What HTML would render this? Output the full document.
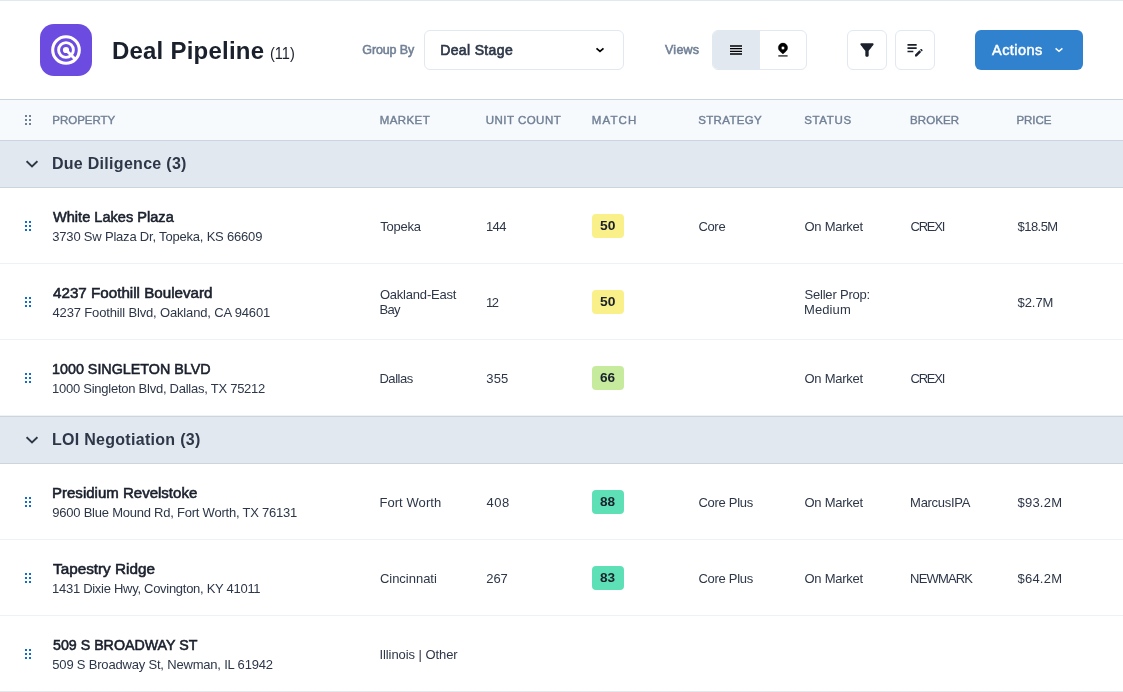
<!DOCTYPE html>
<html><head><meta charset="utf-8"><style>
html,body{margin:0;padding:0;width:1123px;height:692px;overflow:hidden;background:#fff;}
body{position:relative;font-family:"Liberation Sans",sans-serif;}
.wrap{position:absolute;left:0;top:0;width:1123px;height:692px;overflow:hidden;will-change:transform;background:#fff;}
.t{position:absolute;white-space:nowrap;}
svg{display:block}
</style></head><body><div class="wrap">
<div style="position:absolute;left:0px;top:0px;width:1123px;height:1px;background:#E2E8F0"></div>
<div style="position:absolute;left:0px;top:99px;width:1123px;height:1px;background:#CBD5E0"></div>
<div style="position:absolute;left:0px;top:100px;width:1123px;height:40px;background:#F7FAFC"></div>
<div style="position:absolute;left:0px;top:140px;width:1123px;height:1px;background:#CBD5E0"></div>
<div style="position:absolute;left:0px;top:141px;width:1123px;height:46px;background:#E2E8F0"></div>
<div style="position:absolute;left:0px;top:187px;width:1123px;height:1px;background:#CBD5E0"></div>
<div style="position:absolute;left:0px;top:263px;width:1123px;height:1px;background:#EDF2F7"></div>
<div style="position:absolute;left:0px;top:339px;width:1123px;height:1px;background:#EDF2F7"></div>
<div style="position:absolute;left:0px;top:415px;width:1123px;height:1px;background:#EDF2F7"></div>
<div style="position:absolute;left:0px;top:416px;width:1123px;height:1px;background:#CBD5E0"></div>
<div style="position:absolute;left:0px;top:417px;width:1123px;height:46px;background:#E2E8F0"></div>
<div style="position:absolute;left:0px;top:463px;width:1123px;height:1px;background:#CBD5E0"></div>
<div style="position:absolute;left:0px;top:539px;width:1123px;height:1px;background:#EDF2F7"></div>
<div style="position:absolute;left:0px;top:615px;width:1123px;height:1px;background:#EDF2F7"></div>
<div style="position:absolute;left:0px;top:691px;width:1123px;height:1px;background:#E2E8F0"></div>
<div style="position:absolute;left:40px;top:24px;width:52px;height:52px;background:#6B4BE0;border-radius:14px"></div>
<svg style="position:absolute;left:48px;top:32px;" width="36" height="36" viewBox="0 0 36 36"><g fill="none" stroke="#fff" stroke-width="3"><circle cx="18" cy="18" r="13.3" stroke-width="3.1"/><circle cx="18" cy="18" r="7.4" stroke-width="2.9"/></g><circle cx="18" cy="18" r="3.1" fill="#fff"/><path d="M18 18 L28 28" stroke="#fff" stroke-width="3"/></svg>
<div class="t" style="left:111.90px;top:39.03px;font-size:24px;line-height:24px;font-weight:700;color:#1A202C;letter-spacing:0.229px;">Deal Pipeline</div>
<div class="t" style="left:270.09px;top:46.01px;font-size:16px;line-height:16px;font-weight:400;color:#1A202C;letter-spacing:0.000px;transform:scaleX(0.9098);transform-origin:0 0;">(11)</div>
<div class="t" style="left:362.35px;top:43.97px;font-size:12.5px;line-height:12.5px;font-weight:400;color:#718096;letter-spacing:-0.143px;-webkit-text-stroke:0.55px #718096;">Group By</div>
<div style="position:absolute;left:424px;top:30px;width:200px;height:40px;box-sizing:border-box;border:1px solid #E2E8F0;border-radius:6px;background:#fff"></div>
<div class="t" style="left:440.25px;top:43.00px;font-size:14px;line-height:14px;font-weight:400;color:#2D3748;letter-spacing:0.350px;-webkit-text-stroke:0.65px #2D3748;">Deal Stage</div>
<svg style="position:absolute;left:592px;top:42px;" width="16" height="16" viewBox="0 0 16 16"><path d="M4.5 6.3 L8 9.3 L11.5 6.3" fill="none" stroke="#000" stroke-width="1.75"/></svg>
<div class="t" style="left:665.00px;top:43.97px;font-size:12.5px;line-height:12.5px;font-weight:400;color:#718096;letter-spacing:0.250px;-webkit-text-stroke:0.55px #718096;">Views</div>
<div style="position:absolute;left:712px;top:30px;width:95px;height:40px;box-sizing:border-box;border:1px solid #E2E8F0;border-radius:6px;background:#fff;overflow:hidden"></div>
<div style="position:absolute;left:713px;top:31px;width:47px;height:38px;background:#E2E8F0;border-radius:5px 0 0 5px"></div>
<svg style="position:absolute;left:728px;top:42px" width="16" height="16" viewBox="0 0 24 24"><path d="M3 15h18v-2H3v2zm0 4h18v-2H3v2zm0-8h18V9H3v2zm0-6v2h18V5H3z" fill="#000"/></svg>
<svg style="position:absolute;left:774px;top:40px;" width="18" height="20" viewBox="0 0 18 20"><path d="M8.95 13.9 L5.9 11.27 A4.65 4.65 0 1 1 12.0 11.27 Z M8.95 9.65 A1.65 1.65 0 1 0 8.95 6.35 A1.65 1.65 0 1 0 8.95 9.65 Z" fill="#000" stroke="#000" stroke-width="0.4" stroke-linejoin="round" fill-rule="evenodd"/><rect x="4.3" y="15.2" width="9.3" height="1.4" fill="#333"/></svg>
<div style="position:absolute;left:847px;top:30px;width:40px;height:40px;box-sizing:border-box;border:1px solid #E2E8F0;border-radius:6px;background:#fff"></div>
<svg style="position:absolute;left:857px;top:40.2px" width="20" height="20" viewBox="0 0 24 24"><path d="M4.25 5.61C6.27 8.2 10 13 10 13v6c0 .55.45 1 1 1h2c.55 0 1-.45 1-1v-6s3.72-4.8 5.74-7.39c.51-.66.04-1.61-.79-1.61H5.04c-.83 0-1.3.95-.79 1.61z" fill="#1A202C"/></svg>
<div style="position:absolute;left:895px;top:30px;width:40px;height:40px;box-sizing:border-box;border:1px solid #E2E8F0;border-radius:6px;background:#fff"></div>
<svg style="position:absolute;left:905px;top:38.6px" width="20" height="20" viewBox="0 0 24 24"><path d="M3 10h11v2H3v-2zm0-2h11V6H3v2zm0 8h7v-2H3v2zm15.01-3.13.71-.71c.39-.39 1.020-.39 1.41 0l.71.71c.39.39.39 1.02 0 1.41l-.71.71-2.12-2.12zm-.71.71-5.3 5.3V21h2.12l5.3-5.3-2.12-2.12z" fill="#1A202C"/></svg>
<div style="position:absolute;left:975px;top:30px;width:108px;height:40px;background:#3182CE;border-radius:6px"></div>
<div class="t" style="left:992.10px;top:42.98px;font-size:14.5px;line-height:14.5px;font-weight:400;color:#fff;letter-spacing:0.417px;-webkit-text-stroke:0.5px #fff;">Actions</div>
<svg style="position:absolute;left:1051px;top:42px;" width="16" height="16" viewBox="0 0 16 16"><path d="M4.6 6.4 L8 9.4 L11.4 6.4" fill="none" stroke="#fff" stroke-width="1.45"/></svg>
<svg style="position:absolute;left:25px;top:115px;" width="8" height="12" viewBox="0 0 8 12"><g fill="#718096"><rect x="0" y="0" width="2" height="2"/><rect x="4" y="0" width="2" height="2"/><rect x="0" y="4" width="2" height="2"/><rect x="4" y="4" width="2" height="2"/><rect x="0" y="8" width="2" height="2"/><rect x="4" y="8" width="2" height="2"/></g></svg>
<div class="t" style="left:52.30px;top:114.92px;font-size:11.5px;line-height:11.5px;font-weight:400;color:#718096;letter-spacing:-0.021px;-webkit-text-stroke:0.4px #718096;">PROPERTY</div>
<div class="t" style="left:379.80px;top:114.92px;font-size:11.5px;line-height:11.5px;font-weight:400;color:#718096;letter-spacing:0.400px;-webkit-text-stroke:0.4px #718096;">MARKET</div>
<div class="t" style="left:485.70px;top:114.92px;font-size:11.5px;line-height:11.5px;font-weight:400;color:#718096;letter-spacing:0.478px;-webkit-text-stroke:0.4px #718096;">UNIT COUNT</div>
<div class="t" style="left:591.70px;top:114.92px;font-size:11.5px;line-height:11.5px;font-weight:400;color:#718096;letter-spacing:1.150px;-webkit-text-stroke:0.4px #718096;">MATCH</div>
<div class="t" style="left:698.25px;top:114.92px;font-size:11.5px;line-height:11.5px;font-weight:400;color:#718096;letter-spacing:0.329px;-webkit-text-stroke:0.4px #718096;">STRATEGY</div>
<div class="t" style="left:804.15px;top:114.92px;font-size:11.5px;line-height:11.5px;font-weight:400;color:#718096;letter-spacing:0.690px;-webkit-text-stroke:0.4px #718096;">STATUS</div>
<div class="t" style="left:910.10px;top:114.92px;font-size:11.5px;line-height:11.5px;font-weight:400;color:#718096;letter-spacing:0.080px;-webkit-text-stroke:0.4px #718096;">BROKER</div>
<div class="t" style="left:1016.40px;top:114.92px;font-size:11.5px;line-height:11.5px;font-weight:400;color:#718096;letter-spacing:0.000px;-webkit-text-stroke:0.4px #718096;">PRICE</div>
<svg style="position:absolute;left:26px;top:160px;" width="12" height="8" viewBox="0 0 12 8"><path d="M0.6 1.2 L6 6.4 L11.4 1.2" fill="none" stroke="#2D3748" stroke-width="1.85"/></svg>
<div class="t" style="left:51.90px;top:156.01px;font-size:16px;line-height:16px;font-weight:700;color:#2D3748;letter-spacing:0.297px;">Due Diligence (3)</div>
<svg style="position:absolute;left:26px;top:436px;" width="12" height="8" viewBox="0 0 12 8"><path d="M0.6 1.2 L6 6.4 L11.4 1.2" fill="none" stroke="#2D3748" stroke-width="1.85"/></svg>
<div class="t" style="left:51.90px;top:432.01px;font-size:16px;line-height:16px;font-weight:700;color:#2D3748;letter-spacing:0.294px;">LOI Negotiation (3)</div>
<svg style="position:absolute;left:25px;top:221px;" width="8" height="12" viewBox="0 0 8 12"><g fill="#126BC9"><rect x="0" y="0" width="2" height="2"/><rect x="4" y="0" width="2" height="2"/><rect x="0" y="4" width="2" height="2"/><rect x="4" y="4" width="2" height="2"/><rect x="0" y="8" width="2" height="2"/><rect x="4" y="8" width="2" height="2"/></g></svg>
<div class="t" style="left:53.32px;top:210.00px;font-size:14px;line-height:14px;font-weight:400;color:#1A202C;letter-spacing:0.000px;transform:scaleX(1.0415);transform-origin:0 0;-webkit-text-stroke:0.55px #1A202C;">White Lakes Plaza</div>
<div class="t" style="left:52.30px;top:230.05px;font-size:13px;line-height:13px;font-weight:400;color:#2D3748;letter-spacing:-0.197px;">3730 Sw Plaza Dr, Topeka, KS 66609</div>
<div class="t" style="left:380.15px;top:220.05px;font-size:13px;line-height:13px;font-weight:400;color:#2D3748;letter-spacing:-0.230px;">Topeka</div>
<div class="t" style="left:485.95px;top:220.05px;font-size:13px;line-height:13px;font-weight:400;color:#2D3748;letter-spacing:-0.575px;">144</div>
<div style="position:absolute;left:592px;top:214px;width:32px;height:24px;background:#FAF089;border-radius:4px"></div>
<div class="t" style="left:600.01px;top:219.99px;font-size:12px;line-height:12px;font-weight:700;color:#1A202C;letter-spacing:0.000px;transform:scaleX(1.1529);transform-origin:0 0;">50</div>
<div class="t" style="left:698.40px;top:220.05px;font-size:13px;line-height:13px;font-weight:400;color:#2D3748;letter-spacing:-0.317px;">Core</div>
<div class="t" style="left:804.50px;top:220.05px;font-size:13px;line-height:13px;font-weight:400;color:#2D3748;letter-spacing:-0.269px;">On Market</div>
<div class="t" style="left:910.60px;top:220.05px;font-size:13px;line-height:13px;font-weight:400;color:#2D3748;letter-spacing:-1.262px;">CREXI</div>
<div class="t" style="left:1017.50px;top:220.05px;font-size:13px;line-height:13px;font-weight:400;color:#2D3748;letter-spacing:-0.540px;">$18.5M</div>
<svg style="position:absolute;left:25px;top:297px;" width="8" height="12" viewBox="0 0 8 12"><g fill="#126BC9"><rect x="0" y="0" width="2" height="2"/><rect x="4" y="0" width="2" height="2"/><rect x="0" y="4" width="2" height="2"/><rect x="4" y="4" width="2" height="2"/><rect x="0" y="8" width="2" height="2"/><rect x="4" y="8" width="2" height="2"/></g></svg>
<div class="t" style="left:52.80px;top:286.00px;font-size:14px;line-height:14px;font-weight:400;color:#1A202C;letter-spacing:0.000px;transform:scaleX(1.0846);transform-origin:0 0;-webkit-text-stroke:0.55px #1A202C;">4237 Foothill Boulevard</div>
<div class="t" style="left:52.55px;top:306.05px;font-size:13px;line-height:13px;font-weight:400;color:#2D3748;letter-spacing:-0.156px;">4237 Foothill Blvd, Oakland, CA 94601</div>
<div class="t" style="left:379.90px;top:288.05px;font-size:13px;line-height:13px;font-weight:400;color:#2D3748;letter-spacing:-0.205px;">Oakland-East</div>
<div class="t" style="left:379.40px;top:303.05px;font-size:13px;line-height:13px;font-weight:400;color:#2D3748;letter-spacing:-0.600px;">Bay</div>
<div class="t" style="left:485.95px;top:296.05px;font-size:13px;line-height:13px;font-weight:400;color:#2D3748;letter-spacing:-1.450px;">12</div>
<div style="position:absolute;left:592px;top:290px;width:32px;height:24px;background:#FAF089;border-radius:4px"></div>
<div class="t" style="left:600.01px;top:295.99px;font-size:12px;line-height:12px;font-weight:700;color:#1A202C;letter-spacing:0.000px;transform:scaleX(1.1529);transform-origin:0 0;">50</div>
<div class="t" style="left:804.50px;top:288.05px;font-size:13px;line-height:13px;font-weight:400;color:#2D3748;letter-spacing:-0.205px;">Seller Prop:</div>
<div class="t" style="left:804.00px;top:303.05px;font-size:13px;line-height:13px;font-weight:400;color:#2D3748;letter-spacing:0.100px;">Medium</div>
<div class="t" style="left:1017.50px;top:296.05px;font-size:13px;line-height:13px;font-weight:400;color:#2D3748;letter-spacing:-0.062px;">$2.7M</div>
<svg style="position:absolute;left:25px;top:373px;" width="8" height="12" viewBox="0 0 8 12"><g fill="#126BC9"><rect x="0" y="0" width="2" height="2"/><rect x="4" y="0" width="2" height="2"/><rect x="0" y="4" width="2" height="2"/><rect x="4" y="4" width="2" height="2"/><rect x="0" y="8" width="2" height="2"/><rect x="4" y="8" width="2" height="2"/></g></svg>
<div class="t" style="left:52.03px;top:362.00px;font-size:14px;line-height:14px;font-weight:400;color:#1A202C;letter-spacing:0.000px;transform:scaleX(1.0227);transform-origin:0 0;-webkit-text-stroke:0.55px #1A202C;">1000 SINGLETON BLVD</div>
<div class="t" style="left:52.05px;top:382.05px;font-size:13px;line-height:13px;font-weight:400;color:#2D3748;letter-spacing:-0.253px;">1000 Singleton Blvd, Dallas, TX 75212</div>
<div class="t" style="left:379.40px;top:372.05px;font-size:13px;line-height:13px;font-weight:400;color:#2D3748;letter-spacing:-0.430px;">Dallas</div>
<div class="t" style="left:486.20px;top:372.05px;font-size:13px;line-height:13px;font-weight:400;color:#2D3748;letter-spacing:0.225px;">355</div>
<div style="position:absolute;left:592px;top:366px;width:32px;height:24px;background:#C6EB9C;border-radius:4px"></div>
<div class="t" style="left:600.02px;top:371.99px;font-size:12px;line-height:12px;font-weight:700;color:#1A202C;letter-spacing:0.000px;transform:scaleX(1.1308);transform-origin:0 0;">66</div>
<div class="t" style="left:804.50px;top:372.05px;font-size:13px;line-height:13px;font-weight:400;color:#2D3748;letter-spacing:-0.269px;">On Market</div>
<div class="t" style="left:910.60px;top:372.05px;font-size:13px;line-height:13px;font-weight:400;color:#2D3748;letter-spacing:-1.262px;">CREXI</div>
<svg style="position:absolute;left:25px;top:497px;" width="8" height="12" viewBox="0 0 8 12"><g fill="#126BC9"><rect x="0" y="0" width="2" height="2"/><rect x="4" y="0" width="2" height="2"/><rect x="0" y="4" width="2" height="2"/><rect x="4" y="4" width="2" height="2"/><rect x="0" y="8" width="2" height="2"/><rect x="4" y="8" width="2" height="2"/></g></svg>
<div class="t" style="left:52.00px;top:486.00px;font-size:14px;line-height:14px;font-weight:400;color:#1A202C;letter-spacing:0.000px;transform:scaleX(1.0729);transform-origin:0 0;-webkit-text-stroke:0.55px #1A202C;">Presidium Revelstoke</div>
<div class="t" style="left:52.30px;top:506.05px;font-size:13px;line-height:13px;font-weight:400;color:#2D3748;letter-spacing:-0.231px;">9600 Blue Mound Rd, Fort Worth, TX 76131</div>
<div class="t" style="left:379.40px;top:496.05px;font-size:13px;line-height:13px;font-weight:400;color:#2D3748;letter-spacing:0.078px;">Fort Worth</div>
<div class="t" style="left:486.45px;top:496.05px;font-size:13px;line-height:13px;font-weight:400;color:#2D3748;letter-spacing:0.500px;">408</div>
<div style="position:absolute;left:592px;top:490px;width:32px;height:24px;background:#5EE0B6;border-radius:4px"></div>
<div class="t" style="left:600.02px;top:495.99px;font-size:12px;line-height:12px;font-weight:700;color:#1A202C;letter-spacing:0.000px;transform:scaleX(1.1308);transform-origin:0 0;">88</div>
<div class="t" style="left:698.40px;top:496.05px;font-size:13px;line-height:13px;font-weight:400;color:#2D3748;letter-spacing:-0.281px;">Core Plus</div>
<div class="t" style="left:804.50px;top:496.05px;font-size:13px;line-height:13px;font-weight:400;color:#2D3748;letter-spacing:-0.269px;">On Market</div>
<div class="t" style="left:910.10px;top:496.05px;font-size:13px;line-height:13px;font-weight:400;color:#2D3748;letter-spacing:-0.294px;">MarcusIPA</div>
<div class="t" style="left:1017.50px;top:496.05px;font-size:13px;line-height:13px;font-weight:400;color:#2D3748;letter-spacing:0.220px;">$93.2M</div>
<svg style="position:absolute;left:25px;top:573px;" width="8" height="12" viewBox="0 0 8 12"><g fill="#126BC9"><rect x="0" y="0" width="2" height="2"/><rect x="4" y="0" width="2" height="2"/><rect x="0" y="4" width="2" height="2"/><rect x="4" y="4" width="2" height="2"/><rect x="0" y="8" width="2" height="2"/><rect x="4" y="8" width="2" height="2"/></g></svg>
<div class="t" style="left:52.80px;top:562.00px;font-size:14px;line-height:14px;font-weight:400;color:#1A202C;letter-spacing:0.000px;transform:scaleX(1.0914);transform-origin:0 0;-webkit-text-stroke:0.55px #1A202C;">Tapestry Ridge</div>
<div class="t" style="left:52.05px;top:582.05px;font-size:13px;line-height:13px;font-weight:400;color:#2D3748;letter-spacing:-0.285px;">1431 Dixie Hwy, Covington, KY 41011</div>
<div class="t" style="left:379.90px;top:572.05px;font-size:13px;line-height:13px;font-weight:400;color:#2D3748;letter-spacing:-0.017px;">Cincinnati</div>
<div class="t" style="left:486.20px;top:572.05px;font-size:13px;line-height:13px;font-weight:400;color:#2D3748;letter-spacing:-0.025px;">267</div>
<div style="position:absolute;left:592px;top:566px;width:32px;height:24px;background:#5EE0B6;border-radius:4px"></div>
<div class="t" style="left:600.02px;top:571.99px;font-size:12px;line-height:12px;font-weight:700;color:#1A202C;letter-spacing:0.000px;transform:scaleX(1.1308);transform-origin:0 0;">83</div>
<div class="t" style="left:698.40px;top:572.05px;font-size:13px;line-height:13px;font-weight:400;color:#2D3748;letter-spacing:-0.281px;">Core Plus</div>
<div class="t" style="left:804.50px;top:572.05px;font-size:13px;line-height:13px;font-weight:400;color:#2D3748;letter-spacing:-0.269px;">On Market</div>
<div class="t" style="left:910.10px;top:572.05px;font-size:13px;line-height:13px;font-weight:400;color:#2D3748;letter-spacing:-0.842px;">NEWMARK</div>
<div class="t" style="left:1017.50px;top:572.05px;font-size:13px;line-height:13px;font-weight:400;color:#2D3748;letter-spacing:0.220px;">$64.2M</div>
<svg style="position:absolute;left:25px;top:649px;" width="8" height="12" viewBox="0 0 8 12"><g fill="#126BC9"><rect x="0" y="0" width="2" height="2"/><rect x="4" y="0" width="2" height="2"/><rect x="0" y="4" width="2" height="2"/><rect x="4" y="4" width="2" height="2"/><rect x="0" y="8" width="2" height="2"/><rect x="4" y="8" width="2" height="2"/></g></svg>
<div class="t" style="left:52.55px;top:638.00px;font-size:14px;line-height:14px;font-weight:400;color:#1A202C;letter-spacing:0.000px;transform:scaleX(1.0162);transform-origin:0 0;-webkit-text-stroke:0.55px #1A202C;">509 S BROADWAY ST</div>
<div class="t" style="left:52.30px;top:658.05px;font-size:13px;line-height:13px;font-weight:400;color:#2D3748;letter-spacing:-0.190px;">509 S Broadway St, Newman, IL 61942</div>
<div class="t" style="left:379.40px;top:648.05px;font-size:13px;line-height:13px;font-weight:400;color:#2D3748;letter-spacing:-0.063px;">Illinois | Other</div>
</div></body></html>
